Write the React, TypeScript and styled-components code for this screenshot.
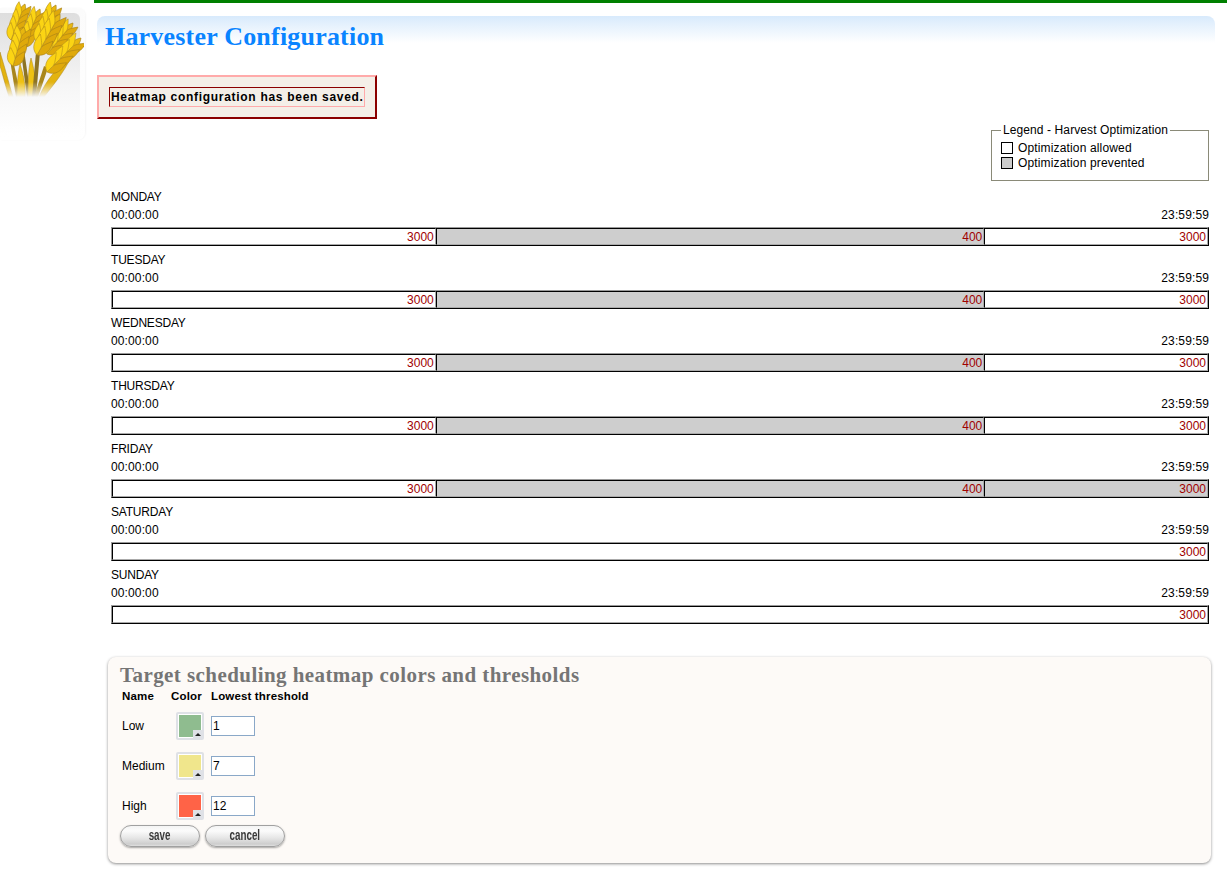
import React from 'react'
import styled, { createGlobalStyle } from 'styled-components'

const GlobalStyle = createGlobalStyle`
  html, body { margin: 0; padding: 0; background: #fff; }
  body { font-family: "Liberation Sans", Arial, sans-serif; font-size: 12px; color: #000; }
`

type Segment = { width: number; value: string; blocked?: boolean }
type Day = { name: string; segments: Segment[] }

const weekday: Segment[] = [
  { width: 324, value: '3000' },
  { width: 551, value: '400', blocked: true },
  { width: 223, value: '3000' },
]

const days: Day[] = [
  { name: 'MONDAY', segments: weekday },
  { name: 'TUESDAY', segments: weekday },
  { name: 'WEDNESDAY', segments: weekday },
  { name: 'THURSDAY', segments: weekday },
  {
    name: 'FRIDAY',
    segments: [
      { width: 324, value: '3000' },
      { width: 551, value: '400', blocked: true },
      { width: 223, value: '3000', blocked: true },
    ],
  },
  { name: 'SATURDAY', segments: [{ width: 1098, value: '3000' }] },
  { name: 'SUNDAY', segments: [{ width: 1098, value: '3000' }] },
]

const levels = [
  { name: 'Low', color: '#8fbc8f', threshold: '1' },
  { name: 'Medium', color: '#f0e68c', threshold: '7' },
  { name: 'High', color: '#ff6347', threshold: '12' },
]

// one ear of wheat, drawn from the stalk end (x1,y1) up to the tip (x2,y2)
function Ear({ x1, y1, x2, y2, w }: { x1: number; y1: number; x2: number; y2: number; w: number }) {
  const length = Math.hypot(x2 - x1, y2 - y1)
  const angle = (Math.atan2(x2 - x1, y1 - y2) * 180) / Math.PI
  const step = length / 5.2
  const grain = step * 2.2
  const rows = [3, 2, 1, 0]
  return (
    <g transform={`translate(${x1} ${y1}) rotate(${angle})`}>
      <path
        d={`M0 ${-length + grain * 1.1} C${w * 0.7} ${-length + grain * 0.9} ${w * 0.5} ${-length + grain * 0.3} 0 ${-length} C${-w * 0.5} ${-length + grain * 0.3} ${-w * 0.7} ${-length + grain * 0.9} 0 ${-length + grain * 1.1}Z`}
        fill="#e8b70f"
        stroke="#a9831a"
        strokeWidth="0.6"
      />
      {rows.map((i) => {
        const s = -i * step
        return (
          <g key={i}>
            <path
              d={`M0 ${s} C${w} ${s - grain * 0.15} ${w * 1.05} ${s - grain * 0.6} ${w * 0.8} ${s - grain} C${w * 0.35} ${s - grain * 0.75} 0 ${s - grain * 0.55} 0 ${s - grain * 0.4}Z`}
              fill="#dfa90b"
              stroke="#a9831a"
              strokeWidth="0.6"
            />
            <path
              d={`M0 ${s} C${-w} ${s - grain * 0.15} ${-w * 1.05} ${s - grain * 0.6} ${-w * 0.8} ${s - grain} C${-w * 0.35} ${s - grain * 0.75} 0 ${s - grain * 0.55} 0 ${s - grain * 0.4}Z`}
              fill="#fbd414"
              stroke="#b8911a"
              strokeWidth="0.6"
            />
          </g>
        )
      })}
    </g>
  )
}

function Wheat() {
  return (
    <WheatIcon width="84" height="100" viewBox="0 0 84 100">
      <defs>
        <linearGradient id="fade" x1="0" y1="0" x2="0" y2="1">
          <stop offset="0" stopColor="#fff" />
          <stop offset="0.82" stopColor="#fff" />
          <stop offset="0.97" stopColor="#000" />
        </linearGradient>
        <mask id="fadeMask">
          <rect width="84" height="100" fill="url(#fade)" />
        </mask>
      </defs>
      <g mask="url(#fadeMask)">
        <path d="M0 52 C5 68 9 84 13 97 L9 97 C5 84 2 72 0 66Z" fill="#e3b30f" stroke="#a9831a" strokeWidth="0.5" />
        <path d="M13 60 L21 97 L16 97 L10 60Z" fill="#a8861c" />
        <path d="M20 64 C24 76 26 88 25 97 L17 97 C17 84 18 72 20 64Z" fill="#eec113" stroke="#a9831a" strokeWidth="0.5" />
        <path d="M24 50 L31 97 L27 97 L21 52Z" fill="#8d7424" />
        <path d="M31 58 C35 72 37 86 35 97 L28 97 C28 84 28 70 31 58Z" fill="#eec113" stroke="#a9831a" strokeWidth="0.5" />
        <path d="M40 52 L36 97 L32 97 L36 52Z" fill="#8d7424" />
        <path d="M48 68 L38 97 L34 97 L44 66Z" fill="#a8861c" />
        <path d="M70 59 C58 66 46 80 39 97 L44 97 C54 84 64 72 70 59Z" fill="#e3b30f" stroke="#a9831a" strokeWidth="0.5" />
        <Ear x1={11} y1={40} x2={25} y2={4} w={8} />
        <Ear x1={23} y1={47} x2={40} y2={9} w={8} />
        <Ear x1={37} y1={42} x2={56} y2={5} w={8} />
        <Ear x1={47} y1={54} x2={73} y2={23} w={8} />
        <Ear x1={13} y1={66} x2={24} y2={27} w={9} />
        <Ear x1={37} y1={55} x2={60} y2={14} w={9} />
        <Ear x1={47} y1={72} x2={81} y2={38} w={9} />
      </g>
    </WheatIcon>
  )
}

export default function App() {
  return (
    <>
      <GlobalStyle />
      <Page>
        <Sidebar>
          <LogoCard>
            <LogoInner />
            <Wheat />
          </LogoCard>
        </Sidebar>
        <Main>
          <TitleBand>
            <Title>Harvester Configuration</Title>
          </TitleBand>
          <Message>
            <MessageText>Heatmap configuration has been saved.</MessageText>
          </Message>
          <Legend>
            <legend>Legend - Harvest Optimization</legend>
            <LegendRow><Swatch />Optimization allowed</LegendRow>
            <LegendRow><Swatch $filled />Optimization prevented</LegendRow>
          </Legend>
          <Schedule>
            {days.map((day) => (
              <DayRow key={day.name}>
                <DayName>{day.name}</DayName>
                <Times>
                  <span>00:00:00</span>
                  <span>23:59:59</span>
                </Times>
                <Bar>
                  {day.segments.map((segment, i) => (
                    <BarSegment key={i} $blocked={segment.blocked} style={{ flexGrow: segment.width }}>
                      {segment.value}
                    </BarSegment>
                  ))}
                </Bar>
              </DayRow>
            ))}
          </Schedule>
          <Panel>
            <PanelTitle>Target scheduling heatmap colors and thresholds</PanelTitle>
            <LevelGrid>
              <HeadCell>Name</HeadCell>
              <HeadCell>Color</HeadCell>
              <HeadCell>Lowest threshold</HeadCell>
              {levels.map((level) => (
                <React.Fragment key={level.name}>
                  <LevelName>{level.name}</LevelName>
                  <ColorButton>
                    <ColorFill $color={level.color} />
                    <ColorArrow />
                  </ColorButton>
                  <ThresholdInput defaultValue={level.threshold} />
                </React.Fragment>
              ))}
            </LevelGrid>
            <Buttons>
              <PillButton><ButtonLabel>save</ButtonLabel></PillButton>
              <PillButton><ButtonLabel>cancel</ButtonLabel></PillButton>
            </Buttons>
          </Panel>
        </Main>
      </Page>
    </>
  )
}

const Page = styled.div`
  display: flex;
  width: 1227px;
  height: 870px;
  overflow: hidden;
`

const Sidebar = styled.div`
  width: 94px;
  flex: none;
  padding-top: 8px;
  box-sizing: border-box;
`

const LogoCard = styled.div`
  position: relative;
  width: 85px;
  height: 132px;
  box-sizing: border-box;
  padding: 5px 5px 0 0;
  background: linear-gradient(#fbfbfb, #fff);
  border-radius: 0 8px 8px 0;
  box-shadow: 1px 0 2px rgba(0, 0, 0, 0.04);
`

const LogoInner = styled.div`
  height: 122px;
  border-radius: 0 6px 0 0;
  background: linear-gradient(#dedede 0%, #f6f6f6 60%, #fff 100%);
`

const WheatIcon = styled.svg`
  position: absolute;
  left: 0;
  top: -8px;
`

const Main = styled.div`
  flex: 1;
  min-width: 0;
  border-top: 3px solid #008000;
  padding: 13px 12px 0 3px;
`

const TitleBand = styled.div`
  height: 43px;
  box-sizing: border-box;
  padding: 1px 0 0 8px;
  border-radius: 8px 8px 0 0;
  background: linear-gradient(#d8eafc, #fff) no-repeat;
  background-size: 100% 27px;
`

const Title = styled.h1`
  margin: 0;
  font-family: "Liberation Serif", "Times New Roman", serif;
  font-size: 26px;
  line-height: 40px;
  letter-spacing: 0.2px;
  font-weight: bold;
  color: #0a84ff;
`

const Message = styled.div`
  width: 280px;
  height: 44px;
  box-sizing: border-box;
  margin-top: 16px;
  padding: 10px;
  background: #f4efe8;
  border-style: solid;
  border-width: 2px;
  border-color: #ffaaaa #8b0000 #8b0000 #ffaaaa;
`

const MessageText = styled.div`
  height: 20px;
  box-sizing: border-box;
  border-style: solid;
  border-width: 1px;
  border-color: #8b0000 #ffaaaa #ffaaaa #8b0000;
  font-weight: bold;
  font-size: 12px;
  line-height: 19px;
  padding-left: 1px;
  letter-spacing: 0.7px;
  white-space: nowrap;
`

const Legend = styled.fieldset`
  width: 218px;
  height: 57px;
  box-sizing: border-box;
  margin: 5px 6px 0 auto;
  padding: 3px 9px 0;
  border: 1px solid #8a8a78;
  font-size: 12px;

  legend {
    padding: 0 2px;
    margin-left: 0;
    line-height: 13px;
    letter-spacing: 0.1px;
  }
`

const LegendRow = styled.div`
  display: flex;
  align-items: center;
  gap: 5px;
  height: 15px;
  letter-spacing: 0.15px;
`

const Swatch = styled.span<{ $filled?: boolean }>`
  width: 12px;
  height: 12px;
  box-sizing: border-box;
  border: 1px solid #000;
  background: ${(p) => (p.$filled ? '#cccccc' : '#fff')};
`

const Schedule = styled.div`
  margin: 7px 6px 0 14px;
`

const DayRow = styled.div`
  height: 63px;
`

const DayName = styled.div`
  height: 18px;
  line-height: 18px;
  letter-spacing: -0.2px;
`

const Times = styled.div`
  display: flex;
  justify-content: space-between;
  height: 18px;
  line-height: 18px;
  margin-bottom: 3px;
  letter-spacing: 0.12px;
`

const Bar = styled.div`
  display: flex;
  height: 19px;
  box-sizing: border-box;
  border-style: solid;
  border-width: 1px;
  border-color: #999 #000 #000 #999;
`

const BarSegment = styled.div<{ $blocked?: boolean }>`
  flex-basis: 0;
  box-sizing: border-box;
  text-align: right;
  color: #a00000;
  font-size: 12px;
  line-height: 15px;
  padding: 1px 1px 0 0;
  border-style: solid;
  border-width: 1px;
  border-color: #000 #aaa #aaa #000;
  background: ${(p) => (p.$blocked ? '#cecece' : '#fff')};
`

const Panel = styled.div`
  margin: 28px 4px 0 11px;
  height: 206px;
  box-sizing: border-box;
  padding: 7px 12px;
  background: #fdfaf7;
  border-radius: 8px;
  box-shadow: 0 1px 3px rgba(0, 0, 0, 0.45);
`

const PanelTitle = styled.h2`
  margin: 0;
  font-family: "Liberation Serif", "Times New Roman", serif;
  font-size: 21px;
  line-height: 22px;
  letter-spacing: 0.43px;
  font-weight: bold;
  color: #757575;
`

const LevelGrid = styled.div`
  display: grid;
  grid-template-columns: 46px 37px 100px;
  grid-template-rows: 20px 40px 40px 40px;
  column-gap: 3px;
  align-items: center;
  padding-left: 2px;
`

const HeadCell = styled.div`
  font-weight: bold;
  font-size: 11.5px;
  letter-spacing: 0.15px;
  white-space: nowrap;
`

const LevelName = styled.div`
  font-size: 12px;
`

const ColorButton = styled.div`
  position: relative;
  width: 28px;
  height: 28px;
  margin-left: 5px;
  box-sizing: border-box;
  padding: 2px;
  background: #dfe1e6;
  border-radius: 2px;
`

const ColorFill = styled.div<{ $color: string }>`
  width: 24px;
  height: 24px;
  box-sizing: border-box;
  border: 1px solid #fff;
  background: ${(p) => p.$color};
`

const ColorArrow = styled.div`
  position: absolute;
  right: 1px;
  bottom: 1px;
  width: 10px;
  height: 9px;
  background: #dfe1e6;

  &::after {
    content: '';
    position: absolute;
    left: 2px;
    top: 3px;
    border-left: 3px solid transparent;
    border-right: 3px solid transparent;
    border-bottom: 3px solid #222;
  }
`

const ThresholdInput = styled.input`
  width: 44px;
  height: 20px;
  box-sizing: border-box;
  padding: 0 1px;
  border: 1px solid #8aa8c8;
  font-family: "Liberation Sans", Arial, sans-serif;
  font-size: 12px;
  outline: none;
`

const Buttons = styled.div`
  display: flex;
  gap: 5px;
  margin-top: -1px;
`

const PillButton = styled.button`
  width: 80px;
  height: 22px;
  padding: 0 0 2px;
  border: 1px solid #a0a0a0;
  border-radius: 11px;
  background: linear-gradient(#f4f4f4 0%, #fbfbfb 25%, #e6e6e6 60%, #cdcdcd 90%, #e0e0e0 100%);
  box-shadow: 0 1px 2px rgba(0, 0, 0, 0.35);
  font-family: "Liberation Sans", Arial, sans-serif;
  font-size: 14px;
  font-weight: bold;
  color: #3a3a3a;
`

const ButtonLabel = styled.span`
  display: inline-block;
  transform: scaleX(0.7);
`
